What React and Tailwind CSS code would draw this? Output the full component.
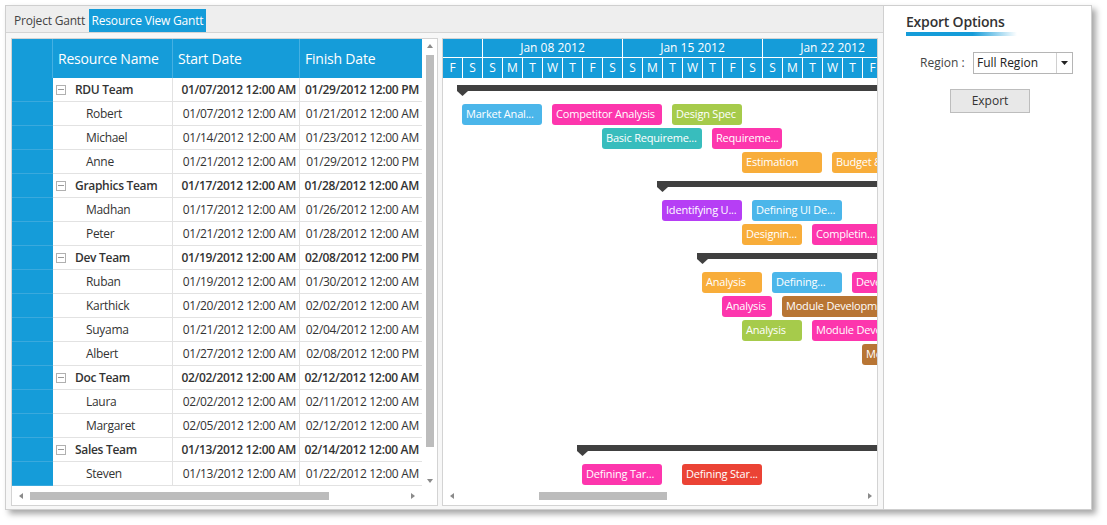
import React from "react";

const C = {
  blue: "bg-[#4bb6ea]",
  pink: "bg-[#fd36ad]",
  green: "bg-[#a6cb4b]",
  teal: "bg-[#38bdbd]",
  orange: "bg-[#f8ad3a]",
  purple: "bg-[#b63ef5]",
  brown: "bg-[#b87534]",
  red: "bg-[#eb4335]",
};

const rows = [
  { name: "RDU Team", start: "01/07/2012 12:00 AM", end: "01/29/2012 12:00 PM", team: true, summary: 14 },
  { name: "Robert", start: "01/07/2012 12:00 AM", end: "01/21/2012 12:00 AM", bars: [[19, 80, "Market Anal...", C.blue], [109, 110, "Competitor Analysis", C.pink], [229, 70, "Design Spec", C.green]] },
  { name: "Michael", start: "01/14/2012 12:00 AM", end: "01/23/2012 12:00 AM", bars: [[159, 100, "Basic Requireme...", C.teal], [269, 70, "Requireme...", C.pink]] },
  { name: "Anne", start: "01/21/2012 12:00 AM", end: "01/29/2012 12:00 PM", bars: [[299, 80, "Estimation", C.orange], [389, 90, "Budget & Cost", C.orange]] },
  { name: "Graphics Team", start: "01/17/2012 12:00 AM", end: "01/28/2012 12:00 AM", team: true, summary: 214 },
  { name: "Madhan", start: "01/17/2012 12:00 AM", end: "01/26/2012 12:00 AM", bars: [[219, 80, "Identifying U...", C.purple], [309, 90, "Defining UI De...", C.blue]] },
  { name: "Peter", start: "01/21/2012 12:00 AM", end: "01/28/2012 12:00 AM", bars: [[299, 60, "Designin...", C.orange], [369, 70, "Completin...", C.pink]] },
  { name: "Dev Team", start: "01/19/2012 12:00 AM", end: "02/08/2012 12:00 PM", team: true, summary: 254 },
  { name: "Ruban", start: "01/19/2012 12:00 AM", end: "01/30/2012 12:00 AM", bars: [[259, 60, "Analysis", C.orange], [329, 70, "Defining...", C.blue], [409, 80, "Development", C.pink]] },
  { name: "Karthick", start: "01/20/2012 12:00 AM", end: "02/02/2012 12:00 AM", bars: [[279, 50, "Analysis", C.pink], [339, 130, "Module Development", C.brown]] },
  { name: "Suyama", start: "01/21/2012 12:00 AM", end: "02/04/2012 12:00 AM", bars: [[299, 60, "Analysis", C.green], [369, 110, "Module Development", C.pink]] },
  { name: "Albert", start: "01/27/2012 12:00 AM", end: "02/08/2012 12:00 PM", bars: [[419, 80, "Module...", C.brown]] },
  { name: "Doc Team", start: "02/02/2012 12:00 AM", end: "02/12/2012 12:00 AM", team: true },
  { name: "Laura", start: "02/02/2012 12:00 AM", end: "02/11/2012 12:00 AM" },
  { name: "Margaret", start: "02/05/2012 12:00 AM", end: "02/12/2012 12:00 AM" },
  { name: "Sales Team", start: "01/13/2012 12:00 AM", end: "02/14/2012 12:00 AM", team: true, summary: 134 },
  { name: "Steven", start: "01/13/2012 12:00 AM", end: "01/22/2012 12:00 AM", bars: [[139, 80, "Defining Tar...", C.pink], [239, 80, "Defining Star...", C.red]] },
];

const days = Array.from({ length: 22 }, (_, i) => "FSSMTWT"[i % 7]);

const Arrow = ({ dir }) => {
  const pts = {
    up: "0,4 3,0 6,4",
    down: "0,0 6,0 3,4",
    left: "4,0 4,6 0,3",
    right: "0,0 0,6 4,3",
  }[dir];
  const vert = dir === "up" || dir === "down";
  return (
    <svg width={vert ? 6 : 4} height={vert ? 4 : 6} className="block">
      <polygon points={pts} fill="#8a8a8a" />
    </svg>
  );
};

const HScroll = ({ thumbLeft, thumbWidth, arrowLeft, arrowRight }) => (
  <div className="relative h-[19px] bg-white">
    <div className="absolute top-[7px]" style={{ left: arrowLeft }}><Arrow dir="left" /></div>
    <div className="absolute top-[6px] h-[8px] bg-[#bcbcbc]" style={{ left: thumbLeft, width: thumbWidth }} />
    <div className="absolute top-[7px]" style={{ left: arrowRight }}><Arrow dir="right" /></div>
  </div>
);

const Collapse = () => (
  <span className="w-[10px] h-[10px] border border-[#b0b0b0] flex items-center justify-center mr-[9px] shrink-0">
    <span className="w-[6px] h-px bg-[#9a9a9a]" />
  </span>
);

function Grid() {
  return (
    <div className="w-[427px] h-[468px] border border-[#d3d3d3] bg-white flex flex-col">
      <div className="flex h-[447px]">
        <div className="w-[410px] flex flex-col">
          <div className="flex h-[39px] bg-[#159cd9] text-white text-[14px] tracking-[-0.2px]">
            <div className="w-[41px] border-r border-[#45b0e2]" />
            <div className="w-[120px] border-r border-[#45b0e2] flex items-center pl-[5px]">Resource Name</div>
            <div className="w-[127px] border-r border-[#45b0e2] flex items-center pl-[5px]">Start Date</div>
            <div className="w-[122px] flex items-center pl-[5px]">Finish Date</div>
          </div>
          {rows.map((r) => (
            <div key={r.name} className={`flex h-[24px] text-[12px] text-[#333] tracking-[-0.3px] ${r.team ? "font-semibold" : ""}`}>
              <div className="w-[41px] bg-[#159cd9] border-b border-[#3aa9dd]" />
              <div className="w-[120px] border-r border-b border-[#e2e2e2] flex items-center">
                {r.team ? (
                  <span className="flex items-center pl-[3px]"><Collapse />{r.name}</span>
                ) : (
                  <span className="pl-[33px]">{r.name}</span>
                )}
              </div>
              <div className="w-[127px] border-r border-b border-[#e2e2e2] flex items-center justify-end pr-[3px]">{r.start}</div>
              <div className="w-[122px] border-b border-[#e2e2e2] flex items-center justify-end pr-[3px]">{r.end}</div>
            </div>
          ))}
        </div>
        <div className="w-[15px] relative bg-white">
          <div className="absolute left-[5px] top-[5px]"><Arrow dir="up" /></div>
          <div className="absolute left-[4px] top-[16px] w-[8px] h-[392px] bg-[#bcbcbc]" />
          <div className="absolute left-[5px] top-[440px]"><Arrow dir="down" /></div>
        </div>
      </div>
      <HScroll thumbLeft={18} thumbWidth={299} arrowLeft={7} arrowRight={399} />
    </div>
  );
}

function Gantt() {
  return (
    <div className="w-[436px] h-[468px] border border-[#d3d3d3] bg-white flex flex-col overflow-hidden">
      <div className="h-[39px] bg-[#159cd9] text-white text-[12px] overflow-hidden">
        <div className="flex h-[19px] border-b border-white">
          <div className="w-[40px] shrink-0 border-r border-white" />
          {["Jan 08 2012", "Jan 15 2012", "Jan 22 2012"].map((w) => (
            <div key={w} className="w-[140px] shrink-0 border-r border-white flex items-center justify-center">{w}</div>
          ))}
        </div>
        <div className="flex h-[20px]">
          {days.map((d, i) => (
            <div key={i} className="w-[20px] shrink-0 border-r border-white flex items-center justify-center">{d}</div>
          ))}
        </div>
      </div>
      <div className="h-[408px] overflow-hidden">
        {rows.map((r) => (
          <div key={r.name} className="relative h-[24px]">
            {r.summary !== undefined && (
              <>
                <div className="absolute top-[7px] right-[-10px] h-[6px] bg-[#404040]" style={{ left: r.summary }} />
                <svg className="absolute top-[13px]" style={{ left: r.summary }} width="11" height="5">
                  <polygon points="0,0 11,0 5.5,5" fill="#404040" />
                </svg>
              </>
            )}
            {r.bars &&
              r.bars.map(([left, width, label, color]) => (
                <div
                  key={label + left}
                  className={`absolute top-[2px] h-[21px] rounded-[3px] ${color} text-white text-[11px] tracking-[-0.2px] pl-[4px] flex items-center whitespace-nowrap overflow-hidden`}
                  style={{ left, width }}
                >
                  {label}
                </div>
              ))}
          </div>
        ))}
      </div>
      <HScroll thumbLeft={96} thumbWidth={128} arrowLeft={7} arrowRight={425} />
    </div>
  );
}

export default function App() {
  return (
    <div className="w-[1107px] h-[525px] bg-white pl-[5px] pt-[5px] font-['Open_Sans',sans-serif]">
      <div className="flex w-[1087px] h-[505px] border border-[#cfcfcf] bg-white shadow-[4px_4px_6px_rgba(0,0,0,0.35)]">
        <div className="w-[878px] flex flex-col bg-[#eeeeee] border-r border-[#d0d0d0]">
          <div className="h-[26px] flex items-end pl-[4px] text-[12px] tracking-[-0.2px]">
            <div className="h-[23px] w-[79px] flex items-center justify-center text-[#444]">Project Gantt</div>
            <div className="h-[23px] w-[117px] flex items-center justify-center bg-[#159cd9] text-white">Resource View Gantt</div>
          </div>
          <div className="flex-1 border-t border-[#d4d4d4] bg-[#f7f7f7] pt-[5px] pl-[5px] flex gap-[4px]">
            <Grid />
            <Gantt />
          </div>
        </div>
        <div className="flex-1 bg-white pl-[22px] pt-[6px]">
          <div className="text-[14px] leading-[20px] font-semibold text-[#333] tracking-[-0.2px]">Export Options</div>
          <div className="w-[111px] h-[4px] bg-[linear-gradient(to_right,#159cd9_60%,rgba(21,156,217,0))]" />
          <div className="flex items-center mt-[16px] pl-[14px] text-[12px] text-[#444]">
            <span className="w-[53px]">Region :</span>
            <div className="w-[100px] h-[22px] border border-[#b5b5b5] flex items-center">
              <span className="flex-1 pl-[3px] text-[#222]">Full Region</span>
              <div className="w-[16px] h-full border-l border-[#d0d0d0] flex items-center justify-center">
                <svg width="7" height="4"><polygon points="0,0 7,0 3.5,4" fill="#222" /></svg>
              </div>
            </div>
          </div>
          <div className="mt-[15px] ml-[44px] w-[80px] h-[24px] bg-[#e8e8e8] border border-[#bdbdbd] flex items-center justify-center text-[12px] text-[#333]">Export</div>
        </div>
      </div>
    </div>
  );
}
